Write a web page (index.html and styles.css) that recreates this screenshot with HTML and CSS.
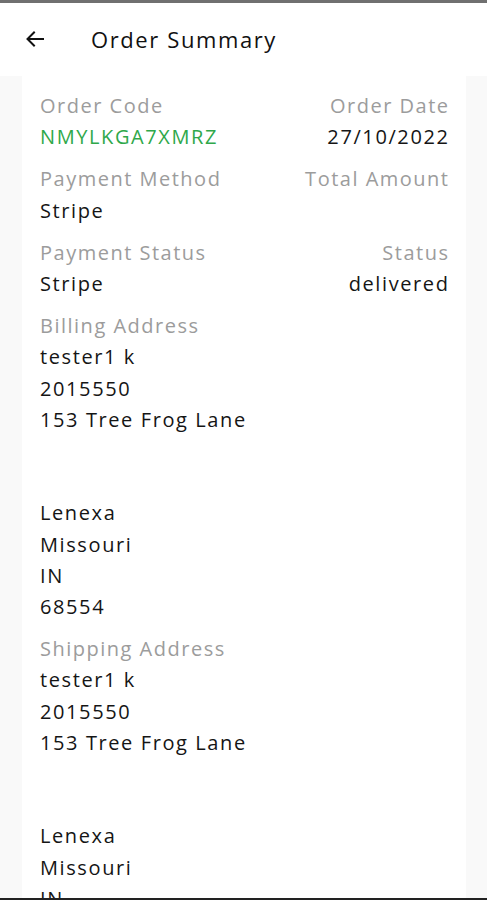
FILE: index.html
```html
<!DOCTYPE html>
<html>
<head>
<meta charset="utf-8">
<link rel="stylesheet" href="styles.css">
</head>
<body>
<div class="screen">
  <div class="topline"></div>
  <header class="appbar">
    <svg class="back" width="24" height="24" viewBox="0 0 24 24"><path d="M20 12H5M11 5.5L4.5 12L11 18.5" fill="none" stroke="#111" stroke-width="2" stroke-linecap="square"/></svg>
    <h1 class="title">Order Summary</h1>
  </header>
  <main class="body">
    <section class="card">
      <div class="row">
        <div class="field"><div class="label">Order Code</div><div class="value green">NMYLKGA7XMRZ</div></div>
        <div class="field right"><div class="label">Order Date</div><div class="value">27/10/2022</div></div>
      </div>
      <div class="row">
        <div class="field"><div class="label">Payment Method</div><div class="value">Stripe</div></div>
        <div class="field right"><div class="label">Total Amount</div><div class="value">&nbsp;</div></div>
      </div>
      <div class="row">
        <div class="field"><div class="label">Payment Status</div><div class="value">Stripe</div></div>
        <div class="field right"><div class="label">Status</div><div class="value">delivered</div></div>
      </div>
      <div class="block">
        <div class="label">Billing Address</div>
        <div class="value">tester1 k</div>
        <div class="value">2015550</div>
        <div class="value">153 Tree Frog Lane</div>
        <div class="value">&nbsp;</div>
        <div class="value">&nbsp;</div>
        <div class="value">Lenexa</div>
        <div class="value">Missouri</div>
        <div class="value">IN</div>
        <div class="value">68554</div>
      </div>
      <div class="block">
        <div class="label">Shipping Address</div>
        <div class="value">tester1 k</div>
        <div class="value">2015550</div>
        <div class="value">153 Tree Frog Lane</div>
        <div class="value">&nbsp;</div>
        <div class="value">&nbsp;</div>
        <div class="value">Lenexa</div>
        <div class="value">Missouri</div>
        <div class="value">IN</div>
        <div class="value">68554</div>
      </div>
    </section>
  </main>
  <div class="bottomline"></div>
</div>
</body>
</html>
```
FILE: styles.css
```css
html, body {
  margin: 0;
  padding: 0;
  background: #fff;
}
body {
  font-family: "Open Sans", "Noto Sans", sans-serif;
  color: #111;
}
.screen {
  width: 487px;
  height: 900px;
  overflow: hidden;
  position: relative;
  display: flex;
  flex-direction: column;
}
.topline {
  height: 3px;
  background: #707070;
  flex: none;
}
.appbar {
  flex: none;
  height: 73px;
  display: flex;
  align-items: center;
  padding-left: 23px;
  box-sizing: border-box;
  padding-bottom: 2px;
}
.back {
  flex: none;
}
.title {
  margin: 0 0 0 44px;
  font-size: 22px;
  font-weight: 400;
  color: #111;
  letter-spacing: 1.6px;
}
.body {
  flex: 1;
  background: #f9f9f9;
  padding: 0 21px 0 22px;
  min-height: 0;
  overflow: hidden;
}
.card {
  background: #fff;
  padding: 14px 18px 0 18px;
  height: 100%;
  box-sizing: border-box;
}
.row {
  display: flex;
  justify-content: space-between;
  margin-bottom: 11px;
}
.field.right {
  text-align: right;
}
.label {
  font-size: 20px;
  line-height: 31.2px;
  color: #9c9c9c;
  letter-spacing: 1.5px;
}
.field.right .label,
.field.right .value {
  margin-right: -1.5px;
}
.value {
  font-size: 20px;
  line-height: 31.2px;
  color: #151515;
  letter-spacing: 1.6px;
}
.value.green {
  color: #2fa84a;
}
.block {
  margin-bottom: 11px;
}
.bottomline {
  position: absolute;
  left: 0;
  right: 0;
  bottom: 0;
  height: 2px;
  background: #222;
}
```
